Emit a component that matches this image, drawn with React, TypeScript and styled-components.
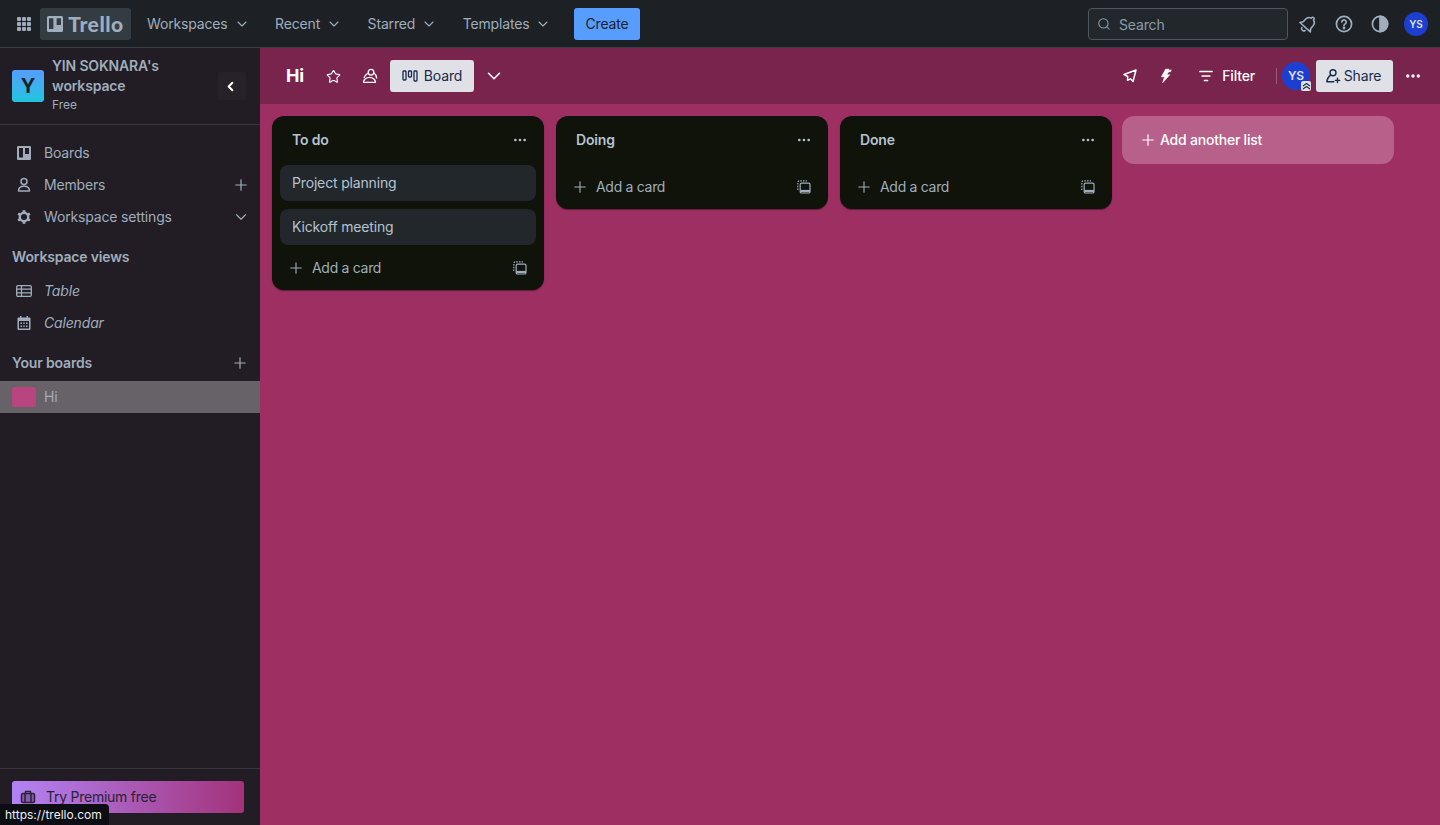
import React from "react";
import styled, { createGlobalStyle } from "styled-components";
import { ChevronDown, ChevronLeft, Plus, Search, Star, Ellipsis } from "lucide-react";

const GlobalStyle = createGlobalStyle`
  html, body { margin: 0; padding: 0; height: 100%; overflow: hidden; }
  body {
    font-family: Inter, "Liberation Sans", sans-serif;
    font-size: 14px;
    line-height: 20px;
    letter-spacing: -0.16px;
    color: #9fadbc;
    background: #9d2f62;
  }
  #root { height: 100%; }
  * { box-sizing: border-box; }
`;

const Page = styled.div`
  width: 1440px;
  height: 825px;
  display: flex;
  flex-direction: column;
  position: relative;
  overflow: hidden;
`;

const TopBar = styled.header`
  height: 48px;
  flex: none;
  display: flex;
  align-items: center;
  padding: 0 6px 0 8px;
  background: #1d2125;
  border-bottom: 1px solid #3a3f45;
`;

const AppSwitcher = styled.div`
  width: 32px;
  height: 32px;
  display: flex;
  align-items: center;
  justify-content: center;
  color: #9fadbc;
`;

const LogoBox = styled.div`
  width: 91px;
  height: 32px;
  display: flex;
  align-items: center;
  justify-content: center;
  gap: 5px;
  background: #333c43;
  border-radius: 3px;
  color: #9fadbc;
  font-family: Lato, Inter, sans-serif;
  font-weight: 900;
  font-size: 21px;
  letter-spacing: 0.5px;
`;

const NavButton = styled.div`
  display: flex;
  align-items: center;
  gap: 6px;
  height: 32px;
  padding: 0 8px;
  margin-right: 9.5px;
  color: #9fadbc;
`;

const NavList = styled.nav`
  display: flex;
  margin-left: 8px;
`;

const CreateButton = styled.div`
  margin-left: 5px;
  width: 66px;
  height: 32px;
  display: flex;
  align-items: center;
  justify-content: center;
  background: #579dff;
  color: #1d2125;
  border-radius: 3px;
`;

const Spacer = styled.div`
  flex: 1;
`;

const SearchBox = styled.div`
  width: 200px;
  height: 32px;
  display: flex;
  align-items: center;
  gap: 8px;
  padding: 0 8px;
  background: #22272b;
  border: 1px solid #4c5660;
  border-radius: 4px;
  color: #8c9bab;
  margin-right: 2px;
`;

const SearchText = styled.span`
  margin-top: 2px;
`;

const IconSlot = styled.div`
  width: 32px;
  height: 32px;
  margin: 0 2px;
  display: flex;
  align-items: center;
  justify-content: center;
  color: #9fadbc;
`;

const Avatar = styled.div<{ $size: number }>`
  width: ${(p) => p.$size}px;
  height: ${(p) => p.$size}px;
  border-radius: 50%;
  background: #1d3fd1;
  color: #dfe1e6;
  font-weight: 600;
  font-size: ${(p) => (p.$size > 26 ? 12 : 10)}px;
  display: flex;
  align-items: center;
  justify-content: center;
  position: relative;
  flex: none;
`;

const Body = styled.div`
  flex: 1;
  min-height: 0;
  display: flex;
`;

const Sidebar = styled.aside`
  width: 260px;
  flex: none;
  display: flex;
  flex-direction: column;
  background: #221d24;
`;

const WorkspaceHead = styled.div`
  height: 77px;
  flex: none;
  display: flex;
  align-items: center;
  padding: 0 14px 0 12px;
  border-bottom: 1px solid #3a343c;
`;

const WorkspaceTile = styled.div`
  width: 32px;
  height: 32px;
  flex: none;
  border-radius: 3px;
  background: linear-gradient(180deg, #579dff, #20c5de);
  color: #1d2125;
  font-weight: 700;
  font-size: 20px;
  display: flex;
  align-items: center;
  justify-content: center;
`;

const WorkspaceText = styled.div`
  margin: 0 0 4px 8px;
  flex: 1;
`;

const WorkspaceName = styled.div`
  font-weight: 600;
  color: #9fadbc;
`;

const WorkspacePlan = styled.div`
  margin-top: 1px;
  font-size: 12px;
  line-height: 16px;
  letter-spacing: 0;
`;

const CollapseButton = styled.div`
  width: 28px;
  height: 28px;
  padding-right: 3px;
  display: flex;
  align-items: center;
  justify-content: center;
  color: #fff;
  background: #27222a;
  border-radius: 3px;
`;

const SideMenu = styled.div`
  flex: 1;
  padding-top: 12px;
  display: flex;
  flex-direction: column;
`;

const SideItem = styled.div<{ $italic?: boolean }>`
  height: 32px;
  flex: none;
  display: flex;
  align-items: center;
  padding: 0 10px 0 16px;
  gap: 12px;
  font-style: ${(p) => (p.$italic ? "italic" : "normal")};
`;

const SideIcon = styled.div`
  width: 16px;
  height: 16px;
  display: flex;
  align-items: center;
  justify-content: center;
  flex: none;
`;

const SideLabel = styled.span`
  flex: 1;
`;

const SectionTitle = styled.div<{ $top: number; $bottom: number }>`
  height: 20px;
  flex: none;
  margin: ${(p) => p.$top}px 0 ${(p) => p.$bottom}px;
  padding: 0 11px 0 12px;
  display: flex;
  align-items: center;
  justify-content: space-between;
  font-weight: 600;
`;

const BoardRow = styled.div`
  height: 32px;
  flex: none;
  display: flex;
  align-items: center;
  gap: 8px;
  padding: 0 12px;
  background: #676268;
`;

const BoardSwatch = styled.div`
  width: 24px;
  height: 20px;
  border-radius: 2px;
  background: #b94580;
`;

const SideFooter = styled.div`
  height: 57px;
  flex: none;
  padding: 12px 16px 0 12px;
  border-top: 1px solid #3a343c;
`;

const PremiumButton = styled.div`
  height: 32px;
  display: flex;
  align-items: center;
  gap: 10px;
  padding: 0 8px;
  border-radius: 3px;
  background: linear-gradient(90deg, #b283f5, #a3327a);
  color: #2a2233;
  letter-spacing: -0.25px;
`;

const StatusTip = styled.div`
  position: absolute;
  left: 0;
  bottom: 0;
  height: 21px;
  padding: 0 7px 0 5px;
  display: flex;
  align-items: center;
  background: #0d0d14;
  border-radius: 0 4px 0 0;
  color: #eceff2;
  font-size: 12px;
  letter-spacing: 0;
`;

const Main = styled.main`
  flex: 1;
  min-width: 0;
  display: flex;
  flex-direction: column;
  background: #9d2f62;
`;

const BoardBar = styled.div`
  height: 56px;
  flex: none;
  display: flex;
  align-items: center;
  padding: 0 7px 0 26px;
  background: #79244d;
  color: #fff;
`;

const BoardTitle = styled.div`
  font-size: 18px;
  font-weight: 700;
  color: #fff;
  margin-right: 11px;
`;

const BarIcon = styled.div<{ $w?: number }>`
  width: ${(p) => p.$w ?? 32}px;
  height: 32px;
  display: flex;
  align-items: center;
  justify-content: center;
  color: #fff;
  flex: none;
`;

const LightButton = styled.div<{ $w: number; $left: number; $gap: number; $trim?: number }>`
  width: ${(p) => p.$w}px;
  height: 32px;
  flex: none;
  display: flex;
  align-items: center;
  justify-content: center;
  gap: ${(p) => p.$gap}px;
  margin-left: ${(p) => p.$left}px;
  padding-right: ${(p) => p.$trim ?? 0}px;
  background: #dfe1e6;
  color: #172b4d;
  border-radius: 3px;
`;

const FilterButton = styled.div`
  display: flex;
  align-items: center;
  gap: 8px;
  height: 32px;
  padding: 0 12px;
  font-weight: 500;
  color: #fff;
`;

const BarDivider = styled.div`
  width: 1px;
  height: 16px;
  margin: 0 5px 0 9px;
  background: rgba(255, 255, 255, 0.25);
`;

const WatchBadge = styled.div`
  position: absolute;
  right: -1px;
  bottom: -1px;
  width: 10px;
  height: 10px;
  display: flex;
  align-items: center;
  justify-content: center;
  background: #dfe1e6;
  border-radius: 2px;
  color: #172b4d;
`;

const Lists = styled.div`
  flex: 1;
  display: flex;
  align-items: flex-start;
  gap: 12px;
  padding: 12px 12px 0;
`;

const ListColumn = styled.section`
  width: 272px;
  flex: none;
  padding-bottom: 4px;
  background: #0f130a;
  border-radius: 12px;
  box-shadow: 0 1px 1px rgba(0, 0, 0, 0.4);
`;

const ListHead = styled.div`
  height: 47px;
  margin-bottom: 2px;
  display: flex;
  align-items: center;
  justify-content: space-between;
  padding: 0 16px 0 20px;
  font-weight: 600;
  color: #b6c2cf;
`;

const CardStack = styled.div`
  display: flex;
  flex-direction: column;
  gap: 8px;
  padding: 0 8px;
`;

const CardItem = styled.div`
  height: 36px;
  display: flex;
  align-items: center;
  padding: 0 12px;
  background: #22272b;
  border-radius: 8px;
  color: #b6c2cf;
`;

const ListFoot = styled.div<{ $gapTop: number }>`
  height: 36px;
  margin-top: ${(p) => p.$gapTop}px;
  display: flex;
  align-items: center;
  padding: 0 17px 0 15px;
  color: #9fadbc;
  letter-spacing: -0.3px;
`;

const AddIcon = styled.div`
  width: 18px;
  height: 18px;
  margin-right: 7px;
  display: flex;
  align-items: center;
  justify-content: center;
`;

const AddListButton = styled.div`
  width: 272px;
  height: 48px;
  flex: none;
  display: flex;
  align-items: center;
  gap: 3px;
  margin-left: -2px;
  padding: 0 16px 0 17px;
  background: #b76089;
  border-radius: 12px;
  color: #fff;
  font-weight: 500;
  letter-spacing: -0.22px;
`;

const GridIcon = () => (
  <svg width="16" height="16" viewBox="0 0 16 16" fill="currentColor">
    {[1, 6, 11].flatMap((y) =>
      [1, 6, 11].map((x) => <rect key={`${x}-${y}`} x={x} y={y} width="4" height="4" rx="1" />)
    )}
  </svg>
);

const TrelloMark = () => (
  <svg width="16" height="16" viewBox="0 0 16 16" fill="currentColor">
    <path fillRule="evenodd" d="M1.500 0h13A1.500 1.500 0 0 1 16 1.500v13a1.500 1.500 0 0 1-1.500 1.500h-13A1.500 1.500 0 0 1 0 14.500v-13A1.500 1.500 0 0 1 1.500 0Zm1.100 2.200a.6.600 0 0 0-.6.6v9.600c0 .3.3.6.6.6h3.200c.3 0 .6-.3.6-.6V2.800a.6.600 0 0 0-.6-.6H2.600Zm7.600 0a.6.600 0 0 0-.6.6v5.600c0 .3.3.6.6.6h3.200c.3 0 .6-.3.6-.6V2.800a.6.600 0 0 0-.6-.6h-3.200Z" />
  </svg>
);

// bell tilted to the right, clapper bottom-left
const BellIcon = () => (
  <svg width="20" height="20" viewBox="0 0 20 20" fill="none" stroke="currentColor" strokeWidth="1.6" strokeLinejoin="round" strokeLinecap="round">
    <g transform="rotate(42 10 10)">
      <path d="M10 1.500c-.8 0-1.400.6-1.400 1.400v.5C6.300 4 5 6 5 8.200v3.300l-2 2.800h14l-2-2.800V8.200c0-2.200-1.300-4.200-3.600-4.800v-.5c0-.8-.6-1.400-1.400-1.400Z" />
      <path d="M7.800 16.800a2.300 2.300 0 0 0 4.400 0" />
    </g>
  </svg>
);

const HelpIcon = () => (
  <svg width="20" height="20" viewBox="0 0 20 20" fill="none" stroke="currentColor" strokeWidth="1.7" strokeLinecap="round">
    <circle cx="10" cy="10" r="7.600" />
    <path d="M7.800 8a2.200 2.200 0 1 1 3.400 1.900c-.8.5-1.200 1-1.200 1.700" />
    <circle cx="10" cy="14" r=".6" fill="currentColor" />
  </svg>
);

const ThemeIcon = () => (
  <svg width="20" height="20" viewBox="0 0 20 20" fill="none" stroke="currentColor" strokeWidth="1.7">
    <circle cx="10" cy="10" r="7.600" />
    <path d="M10 2.400a7.600 7.600 0 0 1 0 15.200Z" fill="currentColor" />
  </svg>
);

const TeamIcon = () => (
  <svg width="16" height="16" viewBox="0 0 16 16" fill="none" stroke="currentColor" strokeWidth="1.300" strokeLinejoin="round">
    <circle cx="9" cy="4.200" r="2.800" />
    <path d="M11.800 4.800c1.500 1 2.700 3.200 3 5.700" />
    <path d="M5.800 5.200C3.800 6.500 2.500 8.300 2 10" />
    <path d="M1.500 14.300c0-2.800 2.800-5 6-5s6 2.200 6 5Z" />
  </svg>
);

const BoardViewIcon = () => (
  <svg width="16" height="16" viewBox="0 0 16 16" fill="none" stroke="currentColor" strokeWidth="1.300">
    <rect x="1" y="3" width="3" height="9" rx=".8" />
    <rect x="6.500" y="3" width="3" height="6" rx=".8" />
    <rect x="12" y="3" width="3" height="10" rx=".8" />
  </svg>
);

const RocketIcon = () => (
  <svg width="16" height="16" viewBox="0 0 16 16" fill="none" stroke="currentColor" strokeWidth="1.500" strokeLinejoin="round">
    <path d="M14 2 11 13.500 8.500 10.800 5.500 12.300 5.700 8.500 2 6.500Z" />
  </svg>
);

const BoltIcon = () => (
  <svg width="16" height="16" viewBox="0 0 16 16" fill="currentColor" stroke="currentColor" strokeWidth=".6" strokeLinejoin="round">
    <path d="M7.600 1.200 3.400 8.800h3.200L4.600 14.800 11.800 6.800H8.800L10.200 4.200 12.800 3.400 13.200 1.800 10.600 2.600 11 1.200Z" />
  </svg>
);

const FilterIcon = () => (
  <svg width="16" height="16" viewBox="0 0 16 16" fill="none" stroke="currentColor" strokeWidth="1.700" strokeLinecap="round">
    <path d="M2 3.500h12M4.200 8h7.600M6.500 12.500h3" />
  </svg>
);

const SharePersonIcon = () => (
  <svg width="16" height="16" viewBox="0 0 16 16" fill="none" stroke="currentColor" strokeWidth="1.400" strokeLinecap="round" strokeLinejoin="round">
    <circle cx="8" cy="4.800" r="3" />
    <path d="M5.600 7C3.400 8.800 2 11 1.800 13.800h7" />
    <path d="M12.500 10.200v4.400M10.300 12.400h4.400" />
  </svg>
);

const WatchIcon = () => (
  <svg width="9" height="9" viewBox="0 0 9 9" fill="none" stroke="currentColor" strokeWidth="1.100" strokeLinejoin="round">
    <path d="M1 4 4.500 1.500 8 4M1 7 4.500 4.500 8 7" />
  </svg>
);

const BoardsIcon = () => (
  <svg width="14" height="14" viewBox="0 0 14 14" fill="currentColor">
    <path fillRule="evenodd" d="M1 0h12a1 1 0 0 1 1 1v12a1 1 0 0 1-1 1H1a1 1 0 0 1-1-1V1a1 1 0 0 1 1-1Zm1 2v9.500h4V2H2Zm6 0v6h4V2H8Z" />
  </svg>
);

const PersonIcon = () => (
  <svg width="16" height="16" viewBox="0 0 16 16" fill="none" stroke="currentColor" strokeWidth="1.500" strokeLinejoin="round">
    <circle cx="8" cy="4.500" r="3" />
    <path d="M2.500 14c0-3 2.200-4.800 5.500-4.800s5.500 1.800 5.500 4.800Z" />
  </svg>
);

const GearIcon = () => (
  <svg width="16" height="16" viewBox="0 0 16 16" fill="none" stroke="currentColor">
    <circle cx="8" cy="8" r="4.200" strokeWidth="2.400" />
    {[0, 60, 120, 180, 240, 300].map((deg) => (
      <path key={deg} d="M8 1.200v2.400" strokeWidth="2.800" transform={`rotate(${deg} 8 8)`} />
    ))}
  </svg>
);

const TableIcon = () => (
  <svg width="16" height="16" viewBox="0 0 16 16" fill="none" stroke="currentColor" strokeWidth="1.300">
    <rect x=".7" y="2.700" width="14.600" height="10.600" rx="1.200" />
    <path d="M.7 6.200h14.600M.7 9.800h14.600M5.500 2.700v10.600" />
  </svg>
);

const CalendarIcon = () => (
  <svg width="14" height="14" viewBox="0 0 14 14" fill="currentColor">
    <path fillRule="evenodd" d="M3 0h1.500v1.500h5V0H11v1.500h1.500a1 1 0 0 1 1 1V13a1 1 0 0 1-1 1h-11a1 1 0 0 1-1-1V2.500a1 1 0 0 1 1-1H3V0ZM2 5v7.500h10V5H2Z" />
    <path d="M3.500 6.500h1.500V8H3.500zM6.250 6.500h1.500V8h-1.500zM9 6.500h1.500V8H9zM3.500 9.500h1.500V11H3.500zM6.250 9.500h1.500V11h-1.500zM9 9.500h1.500V11H9z" />
  </svg>
);

const BriefcaseIcon = () => (
  <svg width="16" height="16" viewBox="0 0 16 16" fill="none" stroke="currentColor" strokeWidth="1.500" strokeLinejoin="round">
    <rect x="1.500" y="4.500" width="13" height="9" rx="1.500" fill="currentColor" fillOpacity=".35" />
    <path d="M5.500 4.500V2.500h5v2M5 4.500v9M11 4.500v9" />
  </svg>
);

const TemplateIcon = () => (
  <svg width="14" height="14" viewBox="0 0 14 14" fill="none" stroke="currentColor" strokeWidth="1.200">
    <path d="M.8 10V2.300A1.500 1.500 0 0 1 2.300.8H10" strokeDasharray="1.600 1.100" />
    <rect x="3.200" y="3.200" width="9.800" height="9.800" rx="1.300" />
    <path d="M3.200 11h9.800" strokeWidth="2.200" />
  </svg>
);

const lists = [
  { title: "To do", cards: ["Project planning", "Kickoff meeting"] },
  { title: "Doing", cards: [] as string[] },
  { title: "Done", cards: [] as string[] },
];

const navItems = ["Workspaces", "Recent", "Starred", "Templates"];

export default function App() {
  return (
    <Page>
      <GlobalStyle />
      <TopBar>
        <AppSwitcher>
          <GridIcon />
        </AppSwitcher>
        <LogoBox>
          <TrelloMark />
          Trello
        </LogoBox>
        <NavList>
          {navItems.map((item) => (
            <NavButton key={item}>
              {item}
              <ChevronDown size={16} strokeWidth={1.6} />
            </NavButton>
          ))}
        </NavList>
        <CreateButton>Create</CreateButton>
        <Spacer />
        <SearchBox>
          <Search size={14} strokeWidth={1.8} />
          <SearchText>Search</SearchText>
        </SearchBox>
        <IconSlot>
          <BellIcon />
        </IconSlot>
        <IconSlot>
          <HelpIcon />
        </IconSlot>
        <IconSlot>
          <ThemeIcon />
        </IconSlot>
        <IconSlot>
          <Avatar $size={24}>YS</Avatar>
        </IconSlot>
      </TopBar>
      <Body>
        <Sidebar>
          <WorkspaceHead>
            <WorkspaceTile>Y</WorkspaceTile>
            <WorkspaceText>
              <WorkspaceName>YIN SOKNARA's workspace</WorkspaceName>
              <WorkspacePlan>Free</WorkspacePlan>
            </WorkspaceText>
            <CollapseButton>
              <ChevronLeft size={15} strokeWidth={3.2} />
            </CollapseButton>
          </WorkspaceHead>
          <SideMenu>
            <SideItem>
              <SideIcon><BoardsIcon /></SideIcon>
              <SideLabel>Boards</SideLabel>
            </SideItem>
            <SideItem>
              <SideIcon><PersonIcon /></SideIcon>
              <SideLabel>Members</SideLabel>
              <Plus size={18} strokeWidth={1.6} />
            </SideItem>
            <SideItem>
              <SideIcon><GearIcon /></SideIcon>
              <SideLabel>Workspace settings</SideLabel>
              <ChevronDown size={18} strokeWidth={1.5} />
            </SideItem>
            <SectionTitle $top={14} $bottom={8}>Workspace views</SectionTitle>
            <SideItem $italic>
              <SideIcon><TableIcon /></SideIcon>
              <SideLabel>Table</SideLabel>
            </SideItem>
            <SideItem $italic>
              <SideIcon><CalendarIcon /></SideIcon>
              <SideLabel>Calendar</SideLabel>
            </SideItem>
            <SectionTitle $top={14} $bottom={8}>
              Your boards
              <Plus size={18} strokeWidth={1.6} />
            </SectionTitle>
            <BoardRow>
              <BoardSwatch />
              Hi
            </BoardRow>
          </SideMenu>
          <SideFooter>
            <PremiumButton>
              <BriefcaseIcon />
              Try Premium free
            </PremiumButton>
          </SideFooter>
        </Sidebar>
        <Main>
          <BoardBar>
            <BoardTitle>Hi</BoardTitle>
            <BarIcon $w={36}><Star size={15} strokeWidth={1.8} /></BarIcon>
            <BarIcon $w={37}><TeamIcon /></BarIcon>
            <LightButton $w={84} $left={2} $gap={6}>
              <BoardViewIcon />
              Board
            </LightButton>
            <BarIcon $w={39}><ChevronDown size={22} strokeWidth={1.7} /></BarIcon>
            <Spacer />
            <BarIcon><RocketIcon /></BarIcon>
            <BarIcon $w={40}><BoltIcon /></BarIcon>
            <FilterButton>
              <FilterIcon />
              Filter
            </FilterButton>
            <BarDivider />
            <Avatar $size={28}>
              YS
              <WatchBadge>
                <WatchIcon />
              </WatchBadge>
            </Avatar>
            <LightButton $w={77} $left={6} $gap={3} $trim={3}>
              <SharePersonIcon />
              Share
            </LightButton>
            <BarIcon $w={40}><Ellipsis size={18} strokeWidth={2.5} /></BarIcon>
          </BoardBar>
          <Lists>
            {lists.map((list) => (
              <ListColumn key={list.title}>
                <ListHead>
                  {list.title}
                  <Ellipsis size={16} strokeWidth={2} />
                </ListHead>
                {list.cards.length > 0 && (
                  <CardStack>
                    {list.cards.map((card) => (
                      <CardItem key={card}>{card}</CardItem>
                    ))}
                  </CardStack>
                )}
                <ListFoot $gapTop={list.cards.length > 0 ? 5 : 6}>
                  <AddIcon><Plus size={18} strokeWidth={1.5} /></AddIcon>
                  <SideLabel>Add a card</SideLabel>
                  <TemplateIcon />
                </ListFoot>
              </ListColumn>
            ))}
            <AddListButton>
              <Plus size={18} strokeWidth={1.6} />
              Add another list
            </AddListButton>
          </Lists>
        </Main>
      </Body>
      <StatusTip>https://trello.com</StatusTip>
    </Page>
  );
}
